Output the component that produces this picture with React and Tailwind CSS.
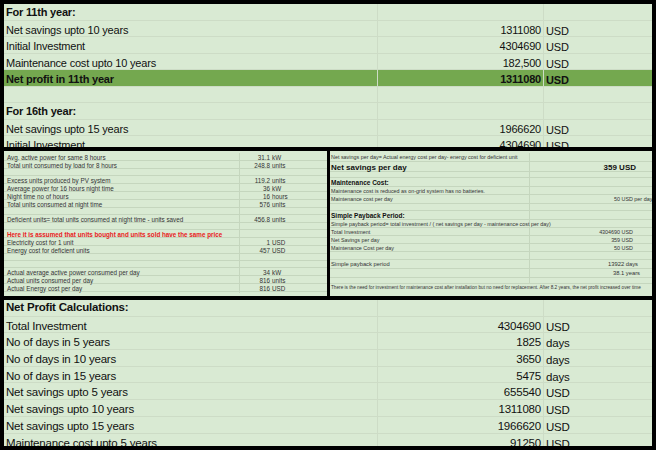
const font = { fontFamily: '"Liberation Sans", Arial, sans-serif' }

function BigRow({ label, value, unit, bold, green, h = 'h-[16.5px]', size = 'text-[11px]' }) {
  return (
    <div className={`grid grid-cols-[374px_166px_1fr] ${h} ${size} tracking-[-0.2px] border-b border-[#cddcc6] ${green ? 'bg-[#74a84f]' : ''} ${bold ? 'font-bold' : ''}`}>
      <div className="pl-[2px] flex items-center border-r border-[#cddcc6] whitespace-nowrap overflow-hidden text-[#111]">{label}</div>
      <div className="pr-[2px] flex items-center justify-end border-r border-[#cddcc6] text-[#111]">{value}</div>
      <div className="pl-[2px] flex items-center text-[#111] pt-[2px]">{unit}</div>
    </div>
  )
}

function SmallRow({ label, value, unit, cls = '', h = 'h-[8px]' }) {
  return (
    <div className={`grid grid-cols-[236px_30px_1fr] ${h} text-[6.3px] border-b border-[#c5d6be] text-[#333]`}>
      <div className={`pl-[3px] flex items-center border-r border-[#c5d6be] whitespace-nowrap overflow-visible ${cls}`}>{label}</div>
      <div className="flex items-center justify-end">{value}</div>
      <div className="pl-[2px] flex items-center">{unit}</div>
    </div>
  )
}

function RRow({ label, value, cls = '', vcls = 'justify-end pr-[19px]', h = 'h-[8.5px]' }) {
  return (
    <div className={`grid grid-cols-[200px_1fr] ${h} text-[5.4px] border-b border-[#c5d6be] text-[#333]`}>
      <div className={`pl-[1px] flex items-center border-r border-[#c5d6be] whitespace-nowrap ${cls}`}>{label}</div>
      <div className={`flex items-center whitespace-nowrap overflow-hidden ${vcls}`}>{value}</div>
    </div>
  )
}

export default function App() {
  return (
    <div className="w-[656px] h-[450px] bg-black p-[4px] flex flex-col gap-[4px]" style={font}>
      <div className="h-[143px] bg-[#d9ead3] overflow-hidden">
        <BigRow label="For 11th year:" bold />
        <BigRow label="Net savings upto 10 years" value="1311080" unit="USD" />
        <BigRow label="Initial Investment" value="4304690" unit="USD" />
        <BigRow label="Maintenance cost upto 10 years" value="182,500" unit="USD" />
        <BigRow label="Net profit in 11th year" value="1311080" unit="USD" bold green />
        <BigRow label="" />
        <BigRow label="For 16th year:" bold />
        <BigRow label="Net savings upto 15 years" value="1966620" unit="USD" />
        <BigRow label="Initial Investment" value="4304690" unit="USD" />
      </div>

      <div className="h-[145px] flex gap-[3px]">
        <div className="w-[323px] bg-[#d9ead3] overflow-hidden pt-[2px]">
          <SmallRow label="Avg. active power for same 8 hours" value="31.1" unit="kW" />
          <SmallRow label="Total unit consumed by load for 8 hours" value="248.8" unit="units" />
          <SmallRow label="" h="h-[7px]" />
          <SmallRow label="Excess units produced by PV system" value="119.2" unit="units" />
          <SmallRow label="Average power for 16 hours night time" value="36" unit="kW" />
          <SmallRow label="Night time no of hours" value="16" unit="hours" />
          <SmallRow label="Total units consumed at night time" value="576" unit="units" />
          <SmallRow label="" h="h-[7px]" />
          <SmallRow label="Deficient units= total units consumed at night time - units saved" value="456.8" unit="units" />
          <SmallRow label="" h="h-[7px]" />
          <SmallRow label="Here it is assumed that units bought and units sold have the same price" cls="text-[#e8201c] font-bold" />
          <SmallRow label="Electricity cost for 1 unit" value="1" unit="USD" />
          <SmallRow label="Energy cost for deficient units" value="457" unit="USD" />
          <SmallRow label="" h="h-[7px]" />
          <SmallRow label="" h="h-[7px]" />
          <SmallRow label="Actual average active power consumed per day" value="34" unit="kW" />
          <SmallRow label="Actual units consumed per day" value="816" unit="units" />
          <SmallRow label="Actual Energy cost per day" value="816" unit="USD" />
        </div>
        <div className="flex-1 bg-[#d9ead3] overflow-hidden pt-[2px]">
          <RRow label="Net savings per day= Actual energy cost per day- energy cost for deficient unit" />
          <RRow label="Net savings per day" value="359 USD" cls="text-[8px] font-bold text-[#111]" vcls="justify-end pr-[16px] text-[8px] font-bold text-[#111]" h="h-[10px]" />
          <RRow label="" h="h-[6px]" />
          <RRow label="Maintenance Cost:" cls="text-[6.5px] font-bold text-[#111]" h="h-[9px]" />
          <RRow label="Maintenance cost is reduced as on-grid system has no batteries." />
          <RRow label="Maintenance cost per day" value="50 USD per day" vcls="justify-start pl-[84px]" />
          <RRow label="" h="h-[7px]" />
          <RRow label="Simple Payback Period:" cls="text-[6.5px] font-bold text-[#111]" h="h-[9px]" />
          <RRow label="Simple payback period= total investment / ( net savings per day - maintenance cost per day)" />
          <RRow label="Total Investment" value="4304690 USD" h="h-[8px]" />
          <RRow label="Net Savings per day" value="359 USD" h="h-[8px]" />
          <RRow label="Maintenance Cost per day" value="50 USD" h="h-[8px]" />
          <RRow label="" h="h-[8px]" />
          <RRow label="Simple payback period" value="13922 days" cls="text-[5.8px]" vcls="justify-end pr-[14px] text-[5.8px]" h="h-[9px]" />
          <RRow label="" value="38.1 years" vcls="justify-end pr-[12px] text-[5.8px]" h="h-[9px]" />
          <RRow label="" h="h-[6px]" />
          <div className="text-[4.7px] whitespace-nowrap text-[#333] pl-[1px] h-[8px] flex items-center">
            There is the need for investment for maintenance cost after installation but no need for replacement. After 8.2 years, the net profit increased over time
          </div>
        </div>
      </div>

      <div className="flex-1 bg-[#d9ead3] overflow-hidden">
        <BigRow label="Net Profit Calculations:" bold h="h-[16.7px]" size="text-[11.5px]" />
        <BigRow label="Total Investment" value="4304690" unit="USD" h="h-[16.7px]" size="text-[11.5px]" />
        <BigRow label="No of days in 5 years" value="1825" unit="days" h="h-[16.7px]" size="text-[11.5px]" />
        <BigRow label="No of days in 10 years" value="3650" unit="days" h="h-[16.7px]" size="text-[11.5px]" />
        <BigRow label="No of days in 15 years" value="5475" unit="days" h="h-[16.7px]" size="text-[11.5px]" />
        <BigRow label="Net savings upto 5 years" value="655540" unit="USD" h="h-[16.7px]" size="text-[11.5px]" />
        <BigRow label="Net savings upto 10 years" value="1311080" unit="USD" h="h-[16.7px]" size="text-[11.5px]" />
        <BigRow label="Net savings upto 15 years" value="1966620" unit="USD" h="h-[16.7px]" size="text-[11.5px]" />
        <BigRow label="Maintenance cost upto 5 years" value="91250" unit="USD" h="h-[16.7px]" size="text-[11.5px]" />
      </div>
    </div>
  )
}
